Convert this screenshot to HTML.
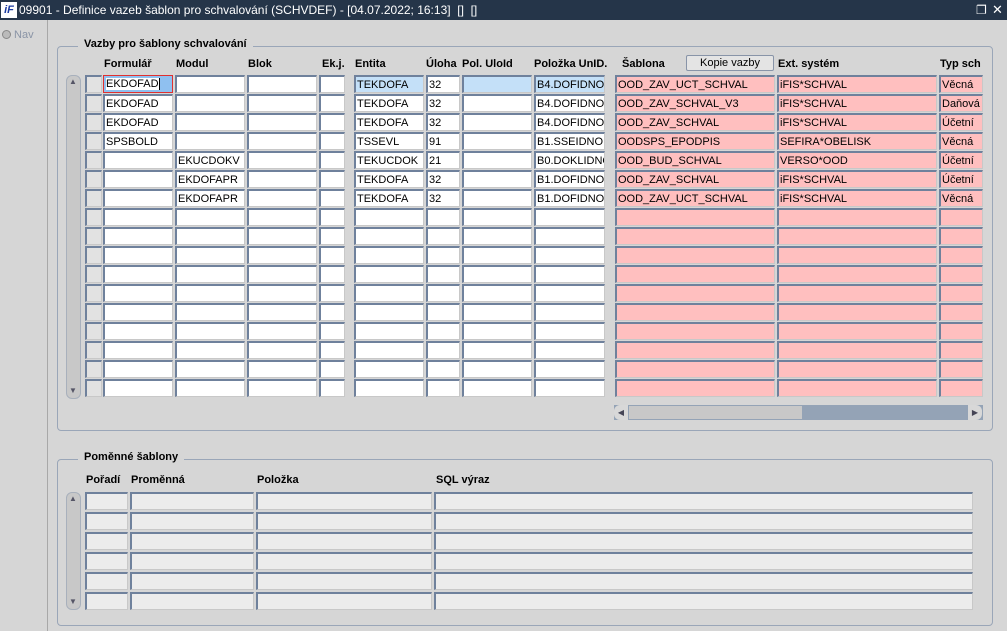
<!DOCTYPE html>
<html><head><meta charset="utf-8"><style>
*{margin:0;padding:0;box-sizing:border-box}
body{width:1007px;height:631px;background:#d6d6d6;font-family:"Liberation Sans",sans-serif;font-size:11px;position:relative;overflow:hidden}
.a{position:absolute}
.t{position:absolute;left:0;top:0;width:1007px;height:20px;background:#253549;color:#fff;font-size:12px;line-height:20px}
.f{position:absolute;height:18px;background:#fff;border:1px solid #c8c8c8;border-top:2px solid #6f819c;border-left:2px solid #6f819c;padding-left:1px;padding-top:1px;line-height:15px;font-size:11px;white-space:nowrap;overflow:hidden;color:#000}
.p{background:#ffbfbf}.b{background:#c4e0f8}.g{background:#ececec}.s{background:#e2e2e2}
.h{position:absolute;font-weight:bold;font-size:11px}
.fr{position:absolute;border:1px solid #9aa6b8;border-radius:4px}
.lg{position:absolute;background:#d6d6d6;padding:0 6px;font-weight:bold;font-size:11px}
.sb{position:absolute;width:15px;background:#c8c8c8;border:1px solid #a8b0bc;border-radius:6px}
</style></head><body>
<div class="t"><span style="display:inline-block;width:16px;height:16px;background:#fff;color:#1a3aa0;font-weight:bold;font-style:italic;font-size:11px;line-height:16px;text-align:center;margin:2px 2px 0 1px;vertical-align:top">iF</span>09901 - Definice vazeb šablon pro schvalování (SCHVDEF) - [04.07.2022; 16:13] &nbsp;[] &nbsp;[]
<span class="a" style="left:976px;top:0;font-size:12px">❐</span><span class="a" style="left:992px;top:0;font-size:13px">✕</span></div>
<div class="a" style="left:47px;top:20px;width:1px;height:611px;background:#a8a8a8"></div>
<div class="a" style="left:2px;top:29px;color:#8a94a6;font-size:11px"><span style="display:inline-block;width:9px;height:9px;border-radius:50%;background:#bbb;border:1px solid #888;vertical-align:-1px"></span> Nav</div>

<div class="fr" style="left:57px;top:46px;width:936px;height:385px"></div>
<div class="lg" style="left:78px;top:38px">Vazby pro šablony schvalování</div>
<div class="h" style="left:104px;top:58px">Formulář</div><div class="h" style="left:176px;top:58px">Modul</div><div class="h" style="left:248px;top:58px">Blok</div><div class="h" style="left:322px;top:58px">Ek.j.</div><div class="h" style="left:355px;top:58px">Entita</div><div class="h" style="left:426px;top:58px">Úloha</div><div class="h" style="left:462px;top:58px">Pol. UloId</div><div class="h" style="left:534px;top:58px">Položka UnID.</div><div class="h" style="left:622px;top:58px">Šablona</div><div class="h" style="left:778px;top:58px">Ext. systém</div><div class="h" style="left:940px;top:58px">Typ sch</div>
<div class="a" style="left:686px;top:55px;width:88px;height:16px;background:#e4e4e4;border:1px solid #8894a8;border-radius:2px;text-align:center;line-height:14px">Kopie vazby</div>
<div class="sb" style="left:66px;top:75px;height:324px"></div>
<div class="a" style="left:69px;top:77px;font-size:8px;color:#556">▲</div><div class="a" style="left:69px;top:386px;font-size:8px;color:#556">▼</div>
<div id="up"></div>
<div class="a" style="left:614px;top:405px;width:369px;height:15px;background:#94a3b6"></div>
<div class="a" style="left:614px;top:405px;width:14px;height:15px;background:#d8d8d8;border-radius:6px 0 0 6px;font-size:8px;line-height:15px;text-align:center;color:#445">◀</div>
<div class="a" style="left:629px;top:406px;width:173px;height:13px;background:#c8c8c8"></div>
<div class="a" style="left:968px;top:405px;width:14px;height:15px;background:#d8d8d8;border-radius:0 6px 6px 0;font-size:8px;line-height:15px;text-align:center;color:#445">▶</div>

<div class="fr" style="left:57px;top:459px;width:936px;height:167px"></div>
<div class="lg" style="left:78px;top:451px">Poměnné šablony</div>
<div class="h" style="left:86px;top:474px">Pořadí</div><div class="h" style="left:131px;top:474px">Proměnná</div><div class="h" style="left:257px;top:474px">Položka</div><div class="h" style="left:436px;top:474px">SQL výraz</div>
<div class="sb" style="left:66px;top:492px;height:118px"></div>
<div class="a" style="left:69px;top:494px;font-size:8px;color:#556">▲</div><div class="a" style="left:69px;top:597px;font-size:8px;color:#556">▼</div>
<div id="lo"></div>
<script>
var d=[["EKDOFAD","","","","TEKDOFA","32","","B4.DOFIDNO","OOD_ZAV_UCT_SCHVAL","iFIS*SCHVAL","Věcná"],
["EKDOFAD","","","","TEKDOFA","32","","B4.DOFIDNO","OOD_ZAV_SCHVAL_V3","iFIS*SCHVAL","Daňová"],
["EKDOFAD","","","","TEKDOFA","32","","B4.DOFIDNO","OOD_ZAV_SCHVAL","iFIS*SCHVAL","Účetní"],
["SPSBOLD","","","","TSSEVL","91","","B1.SSEIDNO","OODSPS_EPODPIS","SEFIRA*OBELISK","Věcná"],
["","EKUCDOKV","","","TEKUCDOK","21","","B0.DOKLIDNO","OOD_BUD_SCHVAL","VERSO*OOD","Účetní"],
["","EKDOFAPR","","","TEKDOFA","32","","B1.DOFIDNO","OOD_ZAV_SCHVAL","iFIS*SCHVAL","Účetní"],
["","EKDOFAPR","","","TEKDOFA","32","","B1.DOFIDNO","OOD_ZAV_UCT_SCHVAL","iFIS*SCHVAL","Věcná"]];
var c=[[103,70],[175,70],[247,70],[319,26],[354,70],[426,34],[462,70],[534,71],[615,160],[777,160],[939,44]];
var h="";
for(var r=0;r<17;r++){var y=75+r*19;
h+='<div class="f s" style="left:85px;top:'+y+'px;width:17px"></div>';
for(var i=0;i<11;i++){var v=(d[r]||[])[i]||"";var cl=i>=8?"f p":"f";
if(r==0&&(i==4||i==6||i==7))cl="f b";
var st="left:"+c[i][0]+"px;top:"+y+"px;width:"+c[i][1]+"px";
if(r==0&&i==0){h+='<div class="f" style="'+st+';border:1px solid #e03030;padding-left:2px;background:#8fc0f0"><span style="background:#fff;border-right:1px solid #000">EKDOFAD</span></div>';continue;}
h+='<div class="'+cl+'" style="'+st+'">'+v+'</div>';}}
document.getElementById("up").innerHTML=h;
h="";var c2=[[85,43],[130,124],[256,176],[434,539]];
for(r=0;r<6;r++){y=492+r*20;for(i=0;i<4;i++)h+='<div class="f g" style="left:'+c2[i][0]+'px;top:'+y+'px;width:'+c2[i][1]+'px"></div>';}
document.getElementById("lo").innerHTML=h;
</script>
</body></html>
